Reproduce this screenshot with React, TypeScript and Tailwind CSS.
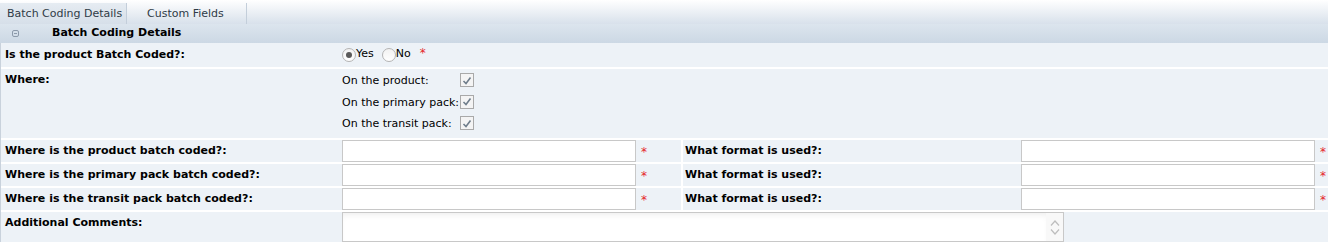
import React from 'react'

const rowBg = 'bg-[#edf2f7]'

function Star({ className = '' }: { className?: string }) {
  return <span className={`text-[#e5262b] text-[12px] leading-[13px] ${className}`}>*</span>
}

function Radio({ checked }: { checked?: boolean }) {
  return (
    <span className="w-[14px] h-[14px] rounded-full border border-[#b4b4b4] bg-linear-to-b from-[#f2f2f2] to-white flex items-center justify-center shrink-0">
      {checked && <span className="w-[6px] h-[6px] rounded-full bg-[#5a5a5a]" />}
    </span>
  )
}

function Checkbox() {
  return (
    <span className="w-[14px] h-[14px] border border-[#a9a9a9] bg-[#f4f4f4] flex items-center justify-center shrink-0">
      <svg width="10" height="9" viewBox="0 0 10 9">
        <path d="M1.5 5 L4 7.5 L8.5 1.5" fill="none" stroke="#6f7d8b" strokeWidth="1.6" />
      </svg>
    </span>
  )
}

function Label({ children, className = '' }: { children: React.ReactNode; className?: string }) {
  return <div className={`font-bold text-[11px] leading-[13px] text-black pt-[4px] whitespace-nowrap ${className}`}>{children}</div>
}

function Input() {
  return <div className="w-[294px] h-[22px] border border-[#c8c8c8] bg-white shrink-0" />
}

function CodedRow({ left, right }: { left: string; right: string }) {
  return (
    <div className="flex h-[22px]">
      <div className={`flex w-[680px] ${rowBg}`}>
        <Label className="w-[341px] pl-[4px]">{left}</Label>
        <Input />
        <div className="flex-1 pl-[5px] pt-[4px] leading-[13px]"><Star /></div>
      </div>
      <div className={`flex ml-[2px] flex-1 ${rowBg}`}>
        <Label className="w-[338px] pl-[2px]">{right}</Label>
        <Input />
        <div className="flex-1 pl-[5px] pt-[4px] leading-[13px]"><Star /></div>
      </div>
    </div>
  )
}

const packs = ['On the product:', 'On the primary pack:', 'On the transit pack:']

export default function App() {
  return (
    <div className="w-[1328px] h-[244px] bg-white font-['DejaVu_Sans',sans-serif] overflow-hidden">
      {/* Tabs */}
      <div className="h-[24px] flex items-end bg-linear-to-b from-white to-[#d8e1eb]">
        <div className="w-[127px] h-[21px] border-r border-[#c3ceda] bg-linear-to-b from-[#e6ecf2] to-[#d6dfe9] pl-[7px] text-[11px] leading-[21px] text-[#2f3b47] whitespace-nowrap">
          Batch Coding Details
        </div>
        <div className="w-[120px] h-[21px] border-r border-[#c3ceda] pl-[20px] text-[11px] leading-[21px] text-[#2f3b47] whitespace-nowrap">
          Custom Fields
        </div>
      </div>

      {/* Section header */}
      <div className="h-[19px] flex items-center bg-linear-to-b from-[#dce5ee] to-[#ccd8e4]">
        <svg width="7" height="7" viewBox="0 0 7 7" className="ml-[12px] shrink-0">
          <rect x="0.5" y="0.5" width="6" height="6" rx="1.5" fill="none" stroke="#8c9aaa" />
          <path d="M2 3.5 H5" stroke="#8c9aaa" />
        </svg>
        <span className="ml-[33px] font-bold text-[11px] text-black whitespace-nowrap">Batch Coding Details</span>
      </div>

      {/* Rows */}
      <div className="flex flex-col gap-[2px] border-l border-[#c9d2dc]">
        <div className={`flex h-[24px] ${rowBg}`}>
          <Label className="w-[341px] pl-[4px] pt-[5px]">Is the product Batch Coded?:</Label>
          <div className="flex items-start pt-[5px] text-[11px] leading-[13px] text-black">
            <Radio checked />
            <span className="-mt-[1px]">Yes</span>
            <span className="ml-[8px]"><Radio /></span>
            <span className="-mt-[1px]">No</span>
            <Star className="ml-[9px] -mt-[1px]" />
          </div>
        </div>

        <div className={`flex h-[69px] ${rowBg}`}>
          <Label className="w-[341px] pl-[4px]">Where:</Label>
          <div className="flex flex-col pt-[4px]">
            {packs.map((p) => (
              <div key={p} className="flex h-[22.5px] items-start">
                <span className="w-[118px] text-[11px] leading-[13px] text-black pt-[1px] whitespace-nowrap">{p}</span>
                <Checkbox />
              </div>
            ))}
          </div>
        </div>

        <CodedRow left="Where is the product batch coded?:" right="What format is used?:" />
        <CodedRow left="Where is the primary pack batch coded?:" right="What format is used?:" />
        <CodedRow left="Where is the transit pack batch coded?:" right="What format is used?:" />

        <div className={`flex h-[30px] ${rowBg}`}>
          <Label className="w-[341px] pl-[4px]">Additional Comments:</Label>
          <div className="w-[722px] h-[30px] border border-[#c8c8c8] bg-white flex">
            <div className="flex-1 shadow-[inset_0_5px_6px_-3px_rgba(0,0,0,0.07)]" />
            <div className="w-[17px] bg-[#f8f8f8] flex flex-col items-center justify-center gap-[3px]">
              <svg width="10" height="6" viewBox="0 0 10 6">
                <path d="M1 5.5 L5 1 L9 5.5" fill="none" stroke="#bdbdbd" strokeWidth="1.2" />
              </svg>
              <svg width="10" height="6" viewBox="0 0 10 6">
                <path d="M1 0.5 L5 5 L9 0.5" fill="none" stroke="#bdbdbd" strokeWidth="1.2" />
              </svg>
            </div>
          </div>
        </div>
      </div>
    </div>
  )
}
